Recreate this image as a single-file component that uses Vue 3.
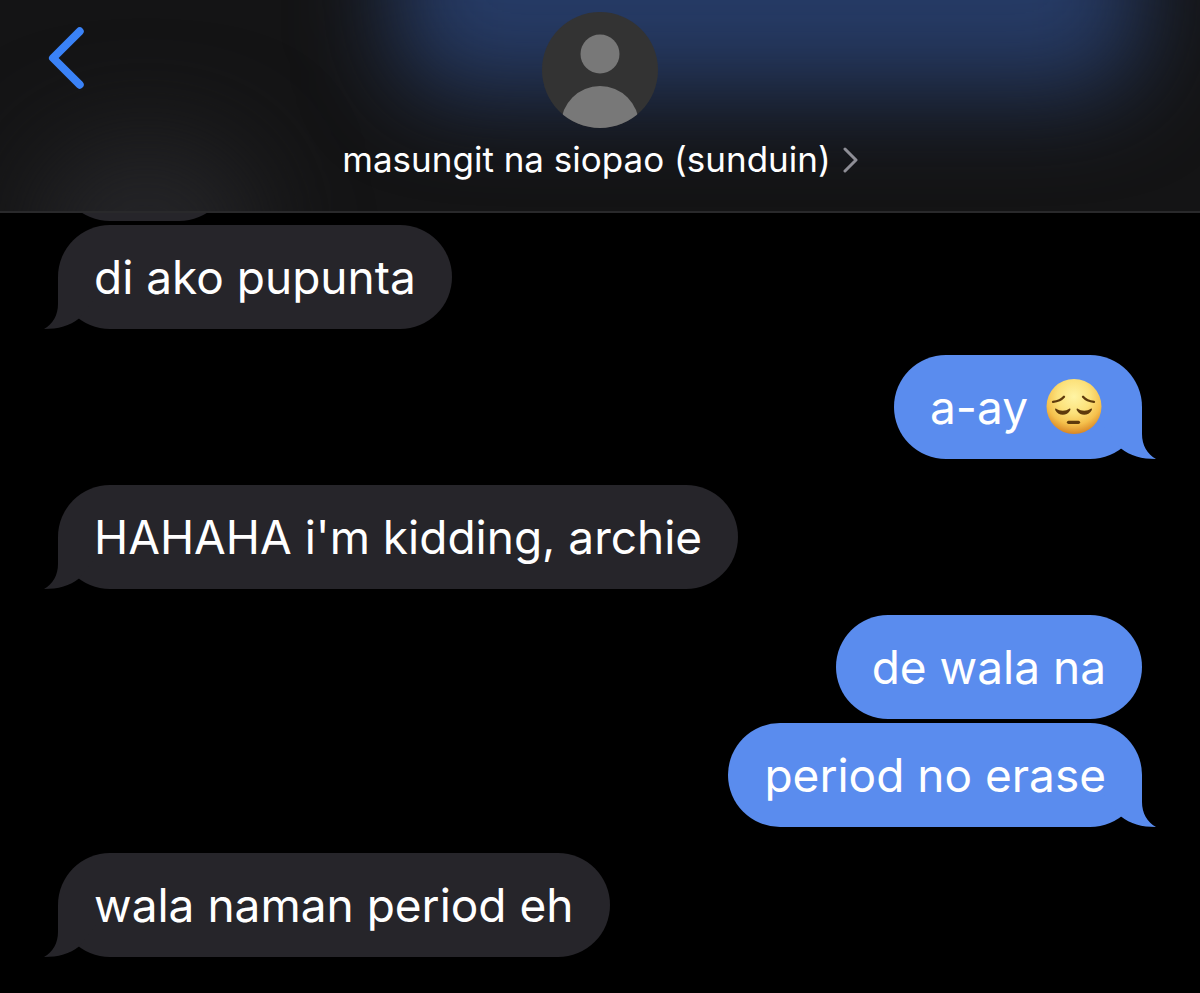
<template>
  <div class="chat">
    <header class="chat-header">
      <div class="glow glow-blue"></div>
      <div class="glow glow-gray"></div>

      <button class="back-btn" type="button" aria-label="Back">
        <svg width="36" height="62" viewBox="0 0 36 62">
          <path d="M31.7 4.3 L5 31 L31.7 57.7" />
        </svg>
      </button>

      <div class="contact">
        <svg class="avatar" width="116" height="116" viewBox="0 0 116 116">
          <defs>
            <clipPath id="avatar-clip">
              <circle cx="58" cy="58" r="58" />
            </clipPath>
          </defs>
          <g clip-path="url(#avatar-clip)">
            <rect width="116" height="116" fill="#333333" />
            <circle cx="58" cy="42" r="19.5" fill="#787878" />
            <ellipse cx="58" cy="113" rx="39" ry="39" fill="#787878" />
          </g>
        </svg>
        <a class="contact-link" href="#">
          <span class="contact-name">{{ contactName }}</span>
          <svg width="15" height="26" viewBox="0 0 15 26">
            <path d="M2 2 L13 13 L2 24" />
          </svg>
        </a>
      </div>
    </header>

    <main class="messages">
      <div class="clipped">
        <div class="bubble clipped-bubble"></div>
      </div>

      <div class="groups">
        <div v-for="(group, i) in groups" :key="i" class="group" :class="group.from">
          <div v-for="(message, j) in group.messages" :key="j" class="bubble">
            <svg
              v-if="j === group.messages.length - 1"
              class="tail"
              width="52"
              height="52"
              viewBox="0 0 52 52"
            >
              <path d="M14 0 V27 C14 38 9 47 0 52 C14 52 26 49 35 41.5 L52 20 V0 Z" />
            </svg>
            <p class="text">{{ message.text }}</p>
            <svg
              v-if="message.pensive"
              class="emoji"
              width="56"
              height="56"
              viewBox="0 0 56 56"
              role="img"
              aria-label="pensive face"
            >
              <defs>
                <radialGradient id="face" cx="0.5" cy="0.32" r="0.68">
                  <stop offset="0" stop-color="#fff4a4" />
                  <stop offset="0.45" stop-color="#fce17a" />
                  <stop offset="0.75" stop-color="#f5c04c" />
                  <stop offset="1" stop-color="#d98625" />
                </radialGradient>
              </defs>
              <circle cx="28" cy="27.5" r="27.5" fill="url(#face)" />
              <g fill="none" stroke="#5e3a0c" stroke-linecap="round">
                <path d="M7 22.9 C11.5 22.4 15.5 20.7 18 17.8" stroke-width="2.3" />
                <path d="M48 22.9 C43.5 22.4 39.5 20.7 37 17.8" stroke-width="2.3" />
                <path d="M22.5 43.3 H32.5" stroke-width="3.2" />
              </g>
              <g fill="#5e3a0c">
                <path d="M10.2 29.7 C13.5 32.3 20 32.3 23.2 29.7 C24.2 29.3 24.8 30.1 24.2 31.2 C21 37.3 12.5 37.3 9.3 31.2 C8.8 30.1 9.300 29.300 10.2 29.7 Z" />
                <path d="M31.8 29.7 C35 32.3 41.5 32.3 44.8 29.7 C45.8 29.3 46.3 30.1 45.700 31.200 C42.500 37.300 34 37.300 30.800 31.200 C30.300 30.100 30.800 29.300 31.8 29.7 Z" />
              </g>
            </svg>
          </div>
        </div>
      </div>
    </main>
  </div>
</template>

<script setup>
import { ref } from 'vue'

const contactName = ref('masungit na siopao (sunduin)')

const groups = ref([
  { from: 'them', messages: [{ text: 'di ako pupunta' }] },
  { from: 'me', messages: [{ text: 'a-ay', pensive: true }] },
  { from: 'them', messages: [{ text: "HAHAHA i'm kidding, archie" }] },
  { from: 'me', messages: [{ text: 'de wala na' }, { text: 'period no erase' }] },
  { from: 'them', messages: [{ text: 'wala naman period eh' }] }
])
</script>

<style>
body {
  margin: 0;
  background: #000;
}
</style>

<style scoped>
.chat {
  min-height: 100vh;
  box-sizing: border-box;
  background: #000;
  color: #fff;
  font-family: Inter, 'Liberation Sans', sans-serif;
  overflow: hidden;
}

.chat-header {
  position: relative;
  display: grid;
  grid-template-columns: 1fr auto 1fr;
  align-items: start;
  padding: 12px 48px 30px;
  background: #141415;
  border-bottom: 2px solid #29292b;
  overflow: hidden;
}

.glow {
  position: absolute;
}

.glow-blue {
  top: -160px;
  left: 33%;
  right: 5%;
  height: 252px;
  border-radius: 60px;
  background: #263b66;
  filter: blur(48px);
}

.glow-gray {
  left: 3%;
  bottom: -120px;
  width: 220px;
  height: 190px;
  border-radius: 80px;
  background: #252528;
  filter: blur(52px);
}

.back-btn {
  position: relative;
  justify-self: start;
  display: flex;
  margin: 15px 0 0;
  padding: 0;
  border: none;
  background: none;
  cursor: pointer;
}

.back-btn path {
  fill: none;
  stroke: #3a82f7;
  stroke-width: 8;
  stroke-linecap: round;
  stroke-linejoin: round;
}

.contact {
  position: relative;
  display: flex;
  flex-direction: column;
  align-items: center;
  gap: 10px;
}

.avatar {
  display: block;
}

.contact-link {
  display: flex;
  align-items: center;
  gap: 12px;
  color: #fff;
  text-decoration: none;
}

.contact-name {
  font-size: 35px;
  line-height: 43px;
  white-space: nowrap;
}

.contact-link path {
  fill: none;
  stroke: #8e8e96;
  stroke-width: 3;
  stroke-linecap: round;
  stroke-linejoin: round;
}

.clipped {
  display: flex;
  align-items: flex-end;
  height: 8px;
  padding: 0 58px;
  overflow: hidden;
}

.clipped-bubble {
  width: 101px;
}

.groups {
  display: flex;
  flex-direction: column;
  gap: 26px;
  padding: 4px 58px 36px;
}

.group {
  display: flex;
  flex-direction: column;
  align-items: flex-start;
  gap: 4px;
}

.group.me {
  align-items: flex-end;
}

.bubble {
  position: relative;
  display: flex;
  flex-shrink: 0;
  align-items: center;
  gap: 18px;
  min-height: 104px;
  padding: 0 36px;
  border-radius: 52px;
  background: #26252a;
}

.me .bubble {
  background: #5a8cee;
}

.tail {
  position: absolute;
  left: -14px;
  bottom: 0;
  fill: #26252a;
}

.me .tail {
  left: auto;
  right: -14px;
  transform: scaleX(-1);
  fill: #5a8cee;
}

.text {
  position: relative;
  margin: 0;
  font-size: 46px;
  line-height: 60px;
}

.emoji {
  position: relative;
  flex-shrink: 0;
  margin-right: 4px;
}
</style>
